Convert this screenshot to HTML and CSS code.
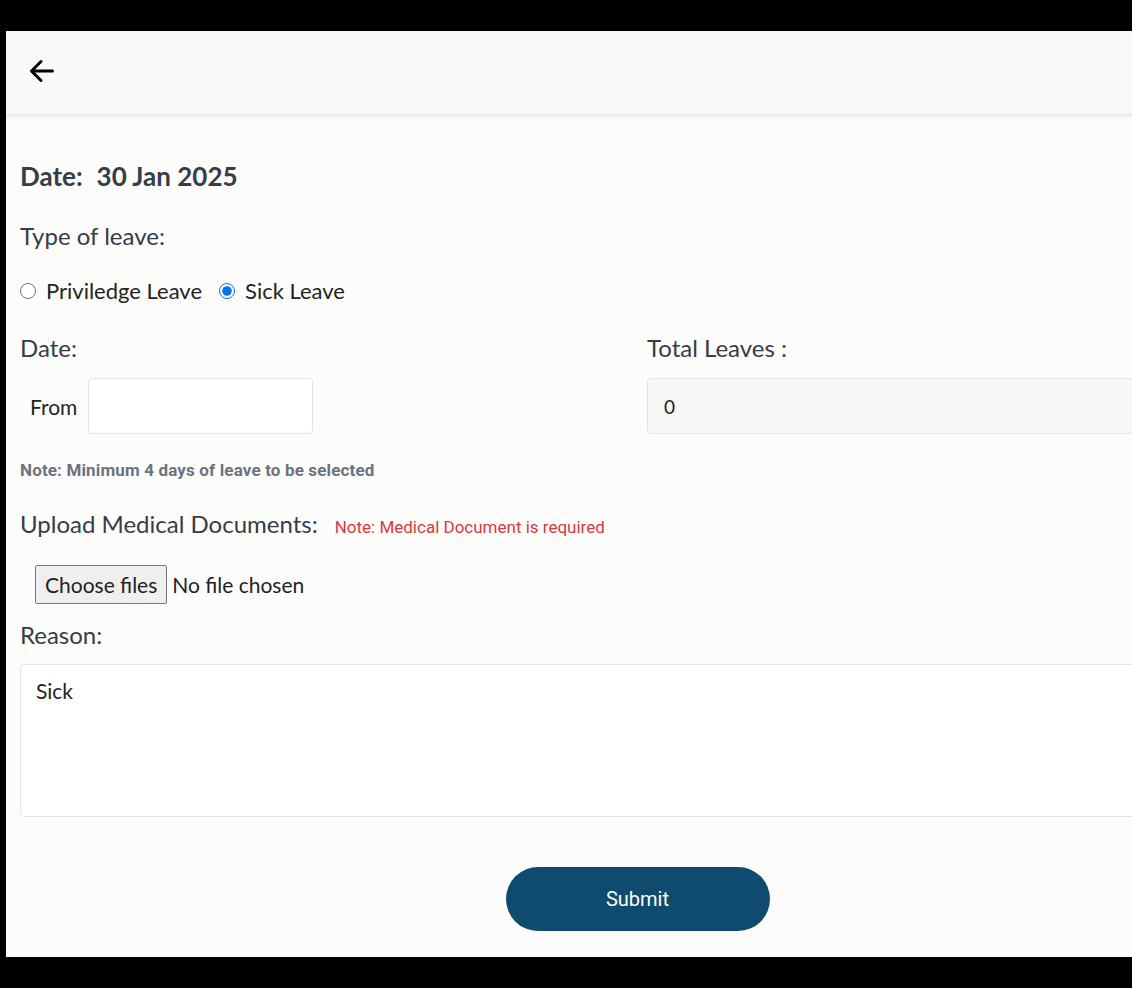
FILE: index.html
```html
<!DOCTYPE html>
<html lang="en">
<head>
<meta charset="utf-8">
<title>Apply Leave</title>
<link rel="stylesheet" href="styles.css">
</head>
<body>
<div class="frame">
  <div class="page">
    <header class="topbar">
      <button class="back" aria-label="Back">
        <svg width="26" height="24" viewBox="0 0 26 24" fill="none" stroke="#000" stroke-width="3" stroke-linecap="round" stroke-linejoin="round">
          <path d="M23.5 12H3"/>
          <path d="M12 2.5L2.5 12L12 21.5"/>
        </svg>
      </button>
    </header>
    <main class="content">
      <h2 class="date-title"><span>Date:</span><span>30 Jan 2025</span></h2>
      <h3 class="label type-label">Type of leave:</h3>
      <div class="radios">
        <label class="radio"><input type="radio" name="type"><span>Priviledge Leave</span></label>
        <label class="radio"><input type="radio" name="type" checked><span>Sick Leave</span></label>
      </div>
      <div class="two-col">
        <div class="col">
          <h3 class="label">Date:</h3>
          <div class="from-row">
            <span class="from">From</span>
            <input class="field from-input" type="text">
          </div>
          <p class="note">Note: Minimum 4 days of leave to be selected</p>
        </div>
        <div class="col">
          <h3 class="label">Total Leaves :</h3>
          <div class="field total">0</div>
        </div>
      </div>
      <div class="upload-head">
        <h3 class="label">Upload Medical Documents:</h3>
        <span class="req">Note: Medical Document is required</span>
      </div>
      <div class="file-row">
        <span class="file-btn">Choose files</span>
        <span class="file-name">No file chosen</span>
      </div>
      <h3 class="label reason-label">Reason:</h3>
      <div class="field reason">Sick</div>
      <div class="actions">
        <button class="submit">Submit</button>
      </div>
    </main>
  </div>
</div>
</body>
</html>
```

FILE: styles.css
```css
html, body {
  margin: 0;
  padding: 0;
  background: #000;
  overflow: hidden;
  height: 988px;
}

.frame {
  padding: 31px 0 0 6px;
  width: 1300px;
}

.page {
  width: 1261px;
  height: 926px;
  background: #fcfcfb;
  font-family: "Lato", "Open Sans", sans-serif;
  color: #363c48;
}

.topbar {
  height: 85px;
  background: #f8f9fb;
  border-bottom: 2px solid #e8e9ea;
  box-shadow: 0 1px 3px rgba(0, 0, 0, 0.06);
  display: flex;
  align-items: center;
  padding-left: 23px;
  box-sizing: border-box;
}

.back {
  border: 0;
  background: none;
  padding: 0;
  margin-top: -4px;
  display: flex;
}

.content {
  padding: 0 8px 0 14px;
}

.date-title {
  margin: 42px 0 0;
  font-size: 26px;
  font-weight: 700;
  display: flex;
  gap: 14px;
  line-height: 36px;
}

.label {
  margin: 0;
  font-size: 24px;
  font-weight: 400;
  line-height: 30px;
  color: #363c48;
}

.type-label {
  margin-top: 27px;
}

.radios {
  display: flex;
  gap: 17px;
  margin-top: 25px;
  font-size: 22px;
  color: #232323;
}

.radio {
  display: flex;
  align-items: center;
  gap: 10px;
  line-height: 30px;
}

.radio input {
  flex: none;
  width: 16px;
  height: 16px;
  min-width: 16px;
  margin: 0;
  accent-color: #0b72f0;
}

.two-col {
  display: grid;
  grid-template-columns: 627px 1fr;
  margin-top: 27px;
}

.from-row {
  display: flex;
  align-items: center;
  margin-top: 15px;
  padding-left: 10px;
}

.from {
  font-size: 21px;
  color: #232323;
  width: 58px;
}

.field {
  box-sizing: border-box;
  border: 1px solid #e4e4e4;
  border-radius: 4px;
  background: #fff;
  font-family: "Lato", sans-serif;
}

.from-input {
  width: 225px;
  height: 56px;
  margin: 0;
}

.total {
  margin-top: 15px;
  height: 56px;
  background: #f7f7f7;
  display: flex;
  align-items: center;
  padding-left: 16px;
  font-size: 19px;
  color: #222;
}

.note {
  margin: 26px 0 0;
  font-family: "Roboto", sans-serif;
  font-weight: 700;
  font-size: 17px;
  letter-spacing: 0.15px;
  color: #6b7280;
}

.upload-head {
  display: flex;
  align-items: baseline;
  gap: 17px;
  margin-top: 29px;
}

.req {
  font-family: "Roboto", sans-serif;
  font-size: 17px;
  color: #d63a3f;
}

.file-row {
  display: flex;
  align-items: center;
  gap: 5px;
  margin-top: 26px;
  padding-left: 15px;
  font-size: 21px;
  color: #1f1f1f;
}

.file-btn {
  box-sizing: border-box;
  height: 39px;
  padding: 0 9px;
  display: flex;
  align-items: center;
  background: #efefef;
  border: 1px solid #777;
  border-radius: 2px;
}

.reason-label {
  margin-top: 16px;
}

.reason {
  margin-top: 14px;
  height: 153px;
  padding: 13px 15px;
  font-size: 21px;
  color: #232323;
}

.actions {
  display: flex;
  justify-content: center;
  margin-top: 50px;
}

.submit {
  width: 264px;
  height: 64px;
  border: 0;
  border-radius: 32px;
  background: #0e4b6e;
  color: #fff;
  font-family: "Roboto", sans-serif;
  font-size: 20px;
  margin-left: -4px;
}
```
